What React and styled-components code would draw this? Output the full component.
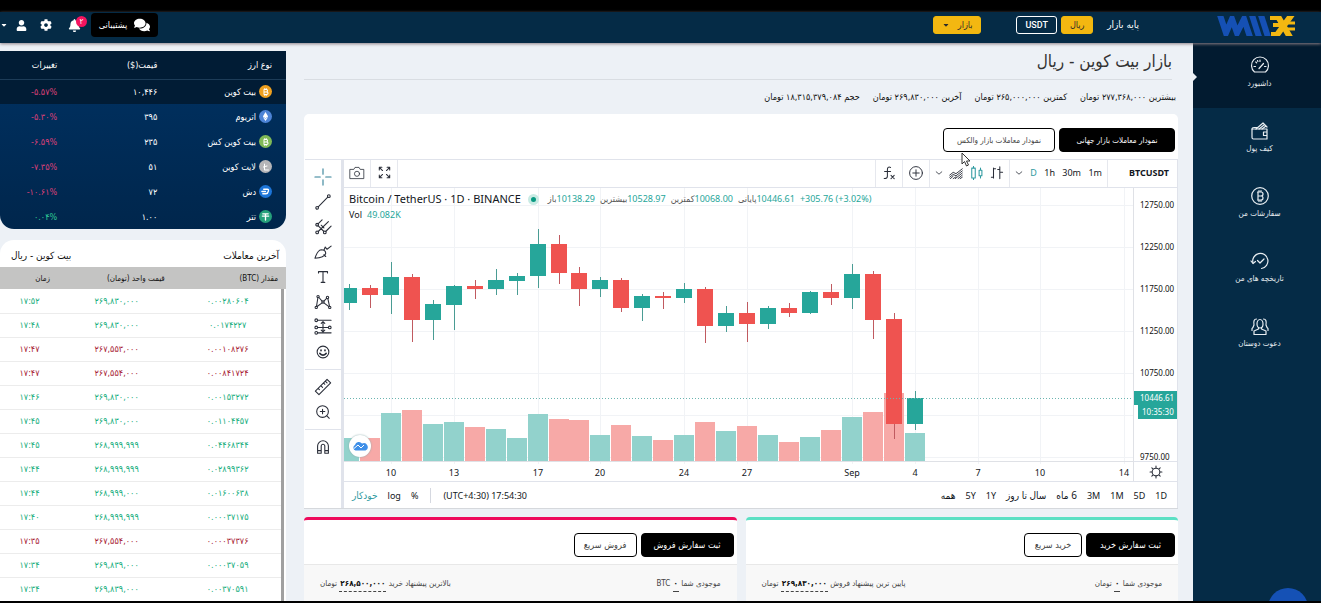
import React from "react";
import styled, { createGlobalStyle, css } from "styled-components";
import { FaCog, FaUser, FaBell, FaComments, FaCaretDown } from "react-icons/fa";
import { FaBitcoinSign, FaEthereum, FaLitecoinSign } from "react-icons/fa6";

const FA = `"DejaVu Sans Condensed", "DejaVu Sans", sans-serif`;
const LATIN = `"Noto Sans", "Open Sans", "DejaVu Sans Condensed", "DejaVu Sans", sans-serif`;
const UP = "#26a69a";
const DOWN = "#ef5350";

const GlobalStyle = createGlobalStyle`
  * { box-sizing: border-box; }
  html, body { margin: 0; background: #000; }
  body { font-family: ${FA}; color: #111; }
  button { font: inherit; cursor: pointer; }
  a { color: inherit; text-decoration: none; }
  table { border-collapse: collapse; border-spacing: 0; }
`;

const Page = styled.div`
  height: 100vh;
  padding: 12px 0 2px;
  display: flex;
  flex-direction: column;
  overflow: hidden;
`;

/* ---------- header ---------- */

const Header = styled.header`
  flex: none;
  display: flex;
  align-items: center;
  height: 31px;
  background: #052b46;
  color: #fff;
  box-shadow: 0 1px 3px #8d8087;
  z-index: 2;
`;

const Brand = styled.a`
  display: flex;
  justify-content: center;
  width: 128px;
  padding-bottom: 4px;
`;

const MarketBase = styled.div`
  display: flex;
  align-items: center;
  gap: 4px;
  padding-right: 54px;
  padding-bottom: 6px;
`;

const BaseLabel = styled.span`
  font-size: 10px;
  margin-left: 10px;
`;

const HeaderButton = styled.button`
  display: flex;
  align-items: center;
  justify-content: center;
  gap: 8px;
  height: 18px;
  min-width: ${(p) => p.$w}px;
  padding: 0;
  border-radius: 3px;
  font-size: 9px;
  border: 1px solid ${(p) => (p.$outline ? "#fff" : "#f0b90b")};
  background: ${(p) => (p.$outline ? "transparent" : "#f3b711")};
  color: ${(p) => (p.$outline ? "#fff" : "#2b2b2b")};
  ${(p) => p.$outline && css`font-family: Roboto, sans-serif; font-weight: 500; font-size: 9px;`}
`;

const MarketMenu = styled.div`
  padding-right: 35px;
  padding-bottom: 6px;
`;

const UserTools = styled.div`
  display: flex;
  align-items: center;
  margin-right: auto;
  padding: 0 0 5px;
`;

const SupportButton = styled.button`
  display: flex;
  align-items: center;
  justify-content: center;
  gap: 7px;
  width: 67px;
  height: 24px;
  padding: 0;
  border: 0;
  border-radius: 4px;
  background: #000;
  color: #fff;
  font-size: 9px;
  margin-left: 10px;
`;

const ToolButton = styled.button`
  position: relative;
  display: flex;
  padding: 0;
  border: 0;
  background: none;
  color: #fff;
  margin-left: ${(p) => p.$gap}px;
`;

const Badge = styled.span`
  position: absolute;
  top: -3px;
  right: -6px;
  width: 11px;
  height: 11px;
  border-radius: 50%;
  background: #f5145f;
  font-size: 8px;
  line-height: 11px;
  text-align: center;
`;

/* ---------- frame ---------- */

const Body = styled.div`
  flex: 1;
  min-height: 0;
  display: flex;
  background: #edf1f6;
`;

const SideWrap = styled.div`
  position: relative;
  display: flex;
  flex: none;
  &::before {
    content: "";
    position: absolute;
    left: 0;
    top: 30px;
    border: 4px solid transparent;
    border-left-color: #edf1f6;
    z-index: 1;
  }
`;

const Sidebar = styled.nav`
  position: relative;
  width: 128px;
  background: #052b46;
  overflow: hidden;
`;

const NavItem = styled.a`
  display: flex;
  flex-direction: column;
  align-items: center;
  gap: 2px;
  height: 65px;
  padding: 13px 0 0 5px;
  background: ${(p) => (p.$active ? "#021b30" : "transparent")};
  color: #e9eef2;
  font-size: 8px;
  line-height: 12px;
`;

const ChatBubble = styled.button`
  position: absolute;
  left: 75px;
  bottom: -27px;
  width: 40px;
  height: 40px;
  border: 0;
  border-radius: 50%;
  background: #1551b5;
`;

const Main = styled.main`
  flex: 1;
  min-width: 0;
  padding: 0 15px 0 18px;
  overflow: hidden;
`;

const Aside = styled.aside`
  flex: none;
  display: flex;
  flex-direction: column;
  gap: 11px;
  width: 286px;
  padding-top: 8px;
`;

/* ---------- coin table ---------- */

const CoinTable = styled.table`
  flex: none;
  width: 100%;
  table-layout: fixed;
  border-radius: 0 0 14px 14px;
  overflow: hidden;
  background: linear-gradient(#003263, #00264c);
  color: #fff;
  font-size: 9px;
  th {
    height: 28px;
    padding: 0;
    text-align: right;
    font-weight: 400;
    background: #011c35;
    border-bottom: 1px solid #1d3c58;
  }
  th:first-child, td:first-child { padding-right: 14px; }
`;

const CoinRow = styled.tr`
  background: ${(p) => (p.$active ? "#011c35" : "transparent")};
  td { height: 25px; padding: 0; text-align: right; }
`;

const CoinName = styled.span`
  display: flex;
  align-items: center;
  gap: 3px;
`;

const CoinIcon = styled.span`
  display: flex;
  align-items: center;
  justify-content: center;
  width: 13px;
  height: 13px;
  border-radius: 50%;
  background: ${(p) => p.$bg};
  color: #fff;
`;

const Change = styled.span`
  color: ${(p) => (p.$up ? "#2fc795" : "#dc4078")};
`;

/* ---------- trades ---------- */

const Trades = styled.section`
  flex: 1;
  min-height: 0;
  background: #fff;
  border-radius: 14px 14px 0 0;
  overflow: hidden;
`;

const TradesTitle = styled.div`
  display: flex;
  justify-content: space-between;
  align-items: center;
  height: 27px;
  padding: 3px 7px 0 11px;
  font-size: 10px;
  h2 { margin: 0; font-size: 10px; font-weight: 400; }
`;

const TradesTable = styled.table`
  width: 100%;
  table-layout: fixed;
  font-size: 9px;
  th {
    height: 22px;
    padding: 0 8px 0 0;
    text-align: right;
    background: #c4c4c3;
    font-size: 8px;
    font-weight: 400;
    white-space: nowrap;
  }
  th:nth-child(2) { padding-right: 4px; }
  th:nth-child(3) { padding-right: 10px; }
`;

const TradesScroll = styled.div`
  border-right: 3px solid #a0a0a0;
  margin-right: 2px;
`;

const TradeRow = styled.tr`
  color: ${(p) => (p.$up ? "#16ad7c" : "#a81c34")};
  td {
    height: 24px;
    padding: 0;
    text-align: center;
    border-bottom: 1px solid #ececec;
  }
`;

/* ---------- market summary ---------- */

const Title = styled.h1`
  margin: 0 6px 0 0;
  height: 37px;
  line-height: 37px;
  border-bottom: 1px solid #d9dde2;
  font-size: 17px;
  font-weight: 400;
  color: #333;
`;

const Stats = styled.div`
  display: flex;
  gap: 13px;
  height: 34px;
  padding-right: 2px;
  line-height: 34px;
  font-size: 9px;
  white-space: nowrap;
`;

const ChartCard = styled.section`
  position: relative;
  background: #fff;
  border-radius: 5px 5px 0 0;
  border-bottom: 1px solid #d5d8dc;
`;

const Tabs = styled.div`
  display: flex;
  gap: 4px;
  padding: 14px 3px 7px;
`;

const PillButton = styled.button`
  height: 24px;
  width: ${(p) => p.$w}px;
  padding: 0;
  border: 1px solid #000;
  border-radius: 4px;
  background: ${(p) => (p.$solid ? "#000" : "#fff")};
  color: ${(p) => (p.$solid ? "#fff" : "#444")};
  font-size: ${(p) => (p.$small ? 8 : 9)}px;
  white-space: nowrap;
`;

const Pointer = styled.svg`
  position: absolute;
  left: 657px;
  top: 38px;
`;

/* ---------- chart widget ---------- */

const Widget = styled.div`
  display: flex;
  direction: ltr;
  height: 349px;
  margin-left: 1px;
  border-top: 1px solid #e0e3eb;
  border-right: 1px solid #e0e3eb;
  font-family: ${LATIN};
`;

const DrawBar = styled.div`
  flex: none;
  display: flex;
  flex-direction: column;
  width: 39px;
  border-right: 3px solid #e0e3eb;
`;

const DrawGroup = styled.div`
  display: flex;
  flex-direction: column;
  padding: ${(p) => p.$pad};
  & + & { border-top: 1px solid #e0e3eb; }
`;

const DrawButton = styled.button`
  display: flex;
  align-items: center;
  justify-content: center;
  height: 25px;
  padding: 0;
  border: 0;
  background: none;
`;

const Pane = styled.div`
  flex: 1;
  min-width: 0;
  display: flex;
  flex-direction: column;
`;

const TopBar = styled.div`
  flex: none;
  display: flex;
  flex-direction: row-reverse;
  height: 28px;
  border-bottom: 1px solid #e0e3eb;
`;

const ToolGroup = styled.div`
  display: flex;
  flex-direction: row-reverse;
  align-items: center;
  justify-content: space-between;
  width: ${(p) => p.$w}px;
  padding: 0 ${(p) => p.$pad || 5}px 2px;
  ${(p) => (p.$end ? "border-right" : "border-left")}: 1px solid #e6e8ee;
  ${(p) => p.$end && "justify-content: center;"}
`;

const Spacer = styled.div`
  flex: 1;
`;

const PlainButton = styled.button`
  display: flex;
  align-items: center;
  padding: 0;
  border: 0;
  background: none;
  font-size: ${(p) => p.$size || 9}px;
  font-weight: ${(p) => (p.$bold ? 700 : 400)};
  color: ${(p) => (p.$on ? "#2f9aa0" : "#131722")};
  white-space: nowrap;
`;

const Plot = styled.div`
  flex: 1;
  min-height: 0;
  display: flex;
`;

const Canvas = styled.div`
  position: relative;
  flex: 1;
  min-width: 0;
  border-right: 1px solid #dfe1e6;
`;

const ChartSvg = styled.svg`
  display: block;
  width: 100%;
  height: 293px;
  text { font-size: 9px; fill: #131722; }
`;

const Legend = styled.div`
  position: absolute;
  left: 5px;
  top: 3px;
  display: flex;
  flex-direction: column;
  color: #131722;
`;

const LegendRow = styled.div`
  display: flex;
  align-items: center;
  height: 16px;
  font-size: 9px;
  line-height: 16px;
  white-space: nowrap;
`;

const Symbol = styled.span`
  font-size: 11px;
`;

const Live = styled.span`
  width: 11px;
  height: 11px;
  margin: 0 9px 0 7px;
  border: 3px solid #c9ebe4;
  border-radius: 50%;
  background: #089981;
`;

const Quote = styled.span`
  margin-right: 5px;
  color: ${(p) => (p.$dark ? "#131722" : "#555")};
  b { font-weight: 400; color: ${UP}; unicode-bidi: isolate; }
`;

const Cloud = styled.span`
  position: absolute;
  left: 5px;
  top: 247px;
  display: flex;
  align-items: center;
  justify-content: center;
  width: 22px;
  height: 22px;
  border-radius: 50%;
  background: #fff;
  box-shadow: 0 0 2px #8aa;
`;

const PriceAxis = styled.div`
  position: relative;
  flex: none;
  display: flex;
  flex-direction: column;
  gap: 28px;
  width: 43px;
  height: 293px;
  padding: 10px 0 0 6px;
  font-size: 8px;
  line-height: 14px;
  overflow: hidden;
  span { height: 14px; }
`;

const PriceTag = styled.div`
  position: absolute;
  top: ${(p) => p.$top}px;
  left: ${(p) => p.$left}px;
  right: 0;
  height: 14px;
  padding-left: ${(p) => p.$pad}px;
  background: ${UP};
  color: #fff;
`;

const AxisSettings = styled.button`
  position: absolute;
  left: 0;
  right: 0;
  bottom: 0;
  display: flex;
  align-items: center;
  justify-content: center;
  height: 20px;
  padding: 0;
  border: 0;
  border-top: 1px solid #e0e3eb;
  background: #fff;
`;

const BottomBar = styled.div`
  flex: none;
  display: flex;
  flex-direction: row-reverse;
  align-items: center;
  gap: 10px;
  height: 27px;
  padding: 0 10px 0 8px;
  border-top: 1px solid #e0e3eb;
`;

const Divider = styled.span`
  width: 1px;
  height: 15px;
  margin: 0 2px;
  background: #d5d8e0;
`;

/* ---------- order panels ---------- */

const Orders = styled.div`
  display: flex;
  gap: 9px;
  padding-top: 8px;
`;

const OrderPanel = styled.section`
  flex: 1;
  border-top: 3px solid ${(p) => p.$accent};
  border-radius: 4px 4px 0 0;
  background: #fff;
`;

const OrderTabs = styled.div`
  display: flex;
  gap: 4px;
  height: 45px;
  padding: 13px 3px 0;
  border-bottom: 1px solid #e8e8e8;
`;

const OrderInfo = styled.div`
  display: flex;
  justify-content: space-between;
  height: 60px;
  padding: 12px 16px 0;
  background: #f8f8f8;
  font-size: 8px;
  line-height: 14px;
  color: #444;
  white-space: nowrap;
`;

const Dashed = styled.b`
  display: inline-block;
  padding: 0 1px;
  border-bottom: 1px dashed #444;
  color: #111;
`;

/* ---------- drawings ---------- */

const Logo = () => (
  <svg width="80" height="20" viewBox="0 0 80 20" role="img" aria-label="Wallex">
    <g fill="none" stroke="#1550b4" strokeWidth="6" strokeLinejoin="miter">
      <path d="M2 -4 L9 17 L15 3 L20 17 L27 3 L34 24" />
      <path d="M34 -4 L43 24" />
      <path d="M43 -4 L52 24" />
    </g>
    <g fill="none" stroke="#f3b711">
      <path strokeWidth="6" d="M59 -3 L74 23 M76 -3 L57 23" />
      <path strokeWidth="4" d="M53 2 H61 M56 9 H66 M54 18 H60" />
      <path strokeWidth="3" d="M68 7 H78 M68 13 H78" />
    </g>
  </svg>
);

const Line = ({ size = 20, w = 1.2, color = "#e9eef2", children }) => (
  <svg width={size} height={size} viewBox="0 0 20 20" fill="none" stroke={color} strokeWidth={w} strokeLinecap="round" strokeLinejoin="round" aria-hidden="true">
    {children}
  </svg>
);

const NAV = [
  ["داشبورد", <><path d="M4.500 16 A8.500 8.500 0 1 1 15.500 16 Z" /><path d="M9 12.500 L13.500 7.500 M4 10.500 h1.500 M14.500 10.500 h1.500 M10 4 v1.500 M5.800 6 l.9 .9 M7.500 4.600 l.4 .8" /></>],
  ["کیف پول", <><path d="M2 8 H17 V18 H3.500 Q2 18 2 16.500 Z M17 11 H13.500 V14.500 H17" /><path d="M6 8 L13 2 L17 6 M9 8 L14 4 M12 8 l4-3 M2 8 Q2 6.500 4 6.500 H7" /></>],
  ["سفارشات من", <><circle cx="10" cy="10" r="8.300" /><path d="M7.500 6 H11 A2 2 0 0 1 11 10 H8 M11 10 A2 2 0 0 1 11 14 H7.500 M8 6 V14 M9 4.500 V6 M11 4.500 V6 M9 14 V15.500 M11 14 V15.500" /></>],
  ["تاریخچه های من", <><path d="M3 12 A7.600 7.600 0 1 1 11.500 17.500" /><path d="M1 10 L3 12.500 L5.500 10.500 M7.500 9.500 L10 12 L14 8" /></>],
  ["دعوت دوستان", <><path d="M7 8 A3 4.500 0 0 1 13 8 A3 4 0 0 1 7 8 Z" /><path d="M8.500 11.500 V13 L4 15 V18.500 H16 V15 L11.500 13 V11.500" /><path d="M6.500 3 Q3 3 4 9 Q3 12 2 12.500 V14.500 M13.500 3 Q17 3 16 9 Q17 12 18 12.500 V14.500" /></>],
];

const INK = "#2a2e39";
const DRAW_TOOLS = [
  [
    ["Cross", <path stroke="#2f7f96" d="M10 1 V7 M10 13 V19 M1 10 H7 M13 10 H19" />],
    ["Trend line", <><circle cx="3.500" cy="16.500" r="1.500" /><circle cx="16.500" cy="3.500" r="1.500" /><path d="M4.700 15.300 L15.300 4.700" /></>],
    ["Pitchfork", <><circle cx="3.500" cy="7.500" r="1.500" /><circle cx="3.500" cy="16" r="1.500" /><circle cx="12" cy="16" r="1.500" /><path d="M4.500 6.500 L9 2 M4.700 15 L16 4 M13 15 L19 9 M4.500 8.500 L11 15 M8 8 l3 3" /></>],
    ["Brush", <path d="M1 17 Q4 8 8 7.500 Q13 7.500 13 11.500 Q12 16 1 17 Z M11 8 L12.500 4.500 L14.500 7 L19 3.500 M11 13 l2 2" />],
    ["Text", <path d="M5 5.500 V4 H15 V5.500 M10 4 V16 M8 16 H12" />],
    ["Patterns", <><circle cx="4.500" cy="4" r="1.300" /><circle cx="2.500" cy="16" r="1.300" /><circle cx="15" cy="5" r="1.300" /><circle cx="17.500" cy="16" r="1.300" /><circle cx="10" cy="10" r="1.300" /><path d="M4.300 5.300 L2.800 14.700 M5.500 5 L9 9 M11 9 L14 6 M15.400 6.300 L17.200 14.700 M3.500 15 L9 11 M11 11 L16.500 15.200" /></>],
    ["Prediction", <><circle cx="2.500" cy="2.500" r="1.500" /><circle cx="2.500" cy="10.500" r="1.500" /><circle cx="17.500" cy="10.500" r="1.500" /><circle cx="2.500" cy="16.500" r="1.500" /><path d="M4 2.500 H19 M4 10.500 H16 M4 16.500 H19 M10 4 V15 M8 6 L10 4 L12 6 M8 13.500 L10 15.500 L12 13.500" /></>],
    ["Emoji", <><circle cx="10" cy="10" r="6.500" /><path strokeWidth="1.800" d="M7.800 7.800 v.8 M12.200 7.800 v.8 M6.500 11.500 Q10 15.500 13.500 11.500" /></>],
  ],
  [
    ["Measure", <path d="M1.500 14.500 L14.500 1.500 L18.500 5.500 L5.500 18.500 Z M4.500 11.500 l1.500 1.500 M7.500 8.500 l2 2 M10.500 5.500 l1.500 1.500 M12.500 3.500 l2 2" />],
    ["Zoom in", <><circle cx="9.500" cy="9.500" r="6.500" /><path d="M14.300 14.300 L17 17 M9.500 7 V12 M7 9.500 H12" /></>],
  ],
  [["Magnet", <path d="M4 17 V9 A6 6 0 0 1 16 9 V17 H12 V9 A2 2 0 0 0 8 9 V17 Z M4 14 H8 M12 14 H16" />]],
];
const DRAW_PADS = ["4px 0 5px", "4px 0 5px", "4px 0"];

const Chevron = () => (
  <Line size={8} w={2} color={INK}><path d="M3 7 L10 13 L17 7" /></Line>
);

/* ---------- data ---------- */

const COINS = [
  ["بیت کوین", "۱۰,۴۴۶", "-۵.۵۷%", "#efa01f", <FaBitcoinSign size={8} />],
  ["اتریوم", "۳۹۵", "-۵.۳۰%", "#4d84d6", <FaEthereum size={9} />],
  ["بیت کوین کش", "۲۳۵", "-۶.۵۹%", "#7fb957", <FaBitcoinSign size={8} />],
  ["لایت کوین", "۵۱", "-۷.۳۵%", "#b5b5b8", <FaLitecoinSign size={8} />],
  ["دش", "۷۲", "-۱۰.۶۱%", "#1c75d8", <Line size={9} w={3} color="#fff"><path d="M6 5 H14 Q18 5 16 10 Q15 15 11 15 H4 M2 10 H10" /></Line>],
  ["تتر", "۱.۰۰", "۰.۰۴%", "#26a17b", <Line size={9} w={3} color="#fff"><path d="M4 4 H16 M10 4 V18 M3 9 H17" /></Line>],
];

const TRADES = [
  ["۰.۰۰۲۸۰۶۰۴", "۲۶۹,۸۳۰,۰۰۰", "۱۷:۵۲", 1],
  ["۰.۰۱۷۴۲۲۷", "۲۶۹,۸۳۰,۰۰۰", "۱۷:۴۸", 1],
  ["۰.۰۰۱۰۸۲۷۶", "۲۶۷,۵۵۳,۰۰۰", "۱۷:۴۷", 0],
  ["۰.۰۰۸۴۱۷۲۴", "۲۶۷,۵۵۴,۰۰۰", "۱۷:۴۷", 0],
  ["۰.۰۰۱۵۳۲۷۲", "۲۶۹,۸۳۰,۰۰۰", "۱۷:۴۶", 1],
  ["۰.۰۱۱۰۴۴۵۷", "۲۶۹,۸۳۰,۰۰۰", "۱۷:۴۵", 1],
  ["۰.۰۴۴۶۸۳۴۴", "۲۶۸,۹۹۹,۹۹۹", "۱۷:۴۵", 1],
  ["۰.۰۲۸۹۹۳۶۲", "۲۶۸,۹۹۹,۹۹۹", "۱۷:۴۴", 1],
  ["۰.۰۱۶۰۰۶۳۸", "۲۶۸,۹۹۹,۰۰۰", "۱۷:۴۴", 1],
  ["۰.۰۰۰۳۷۱۷۵", "۲۶۸,۹۹۹,۹۹۹", "۱۷:۴۰", 1],
  ["۰.۰۰۰۳۷۳۷۶", "۲۶۷,۵۵۴,۰۰۰", "۱۷:۳۵", 0],
  ["۰.۰۰۰۳۷۰۵۹", "۲۶۹,۸۳۹,۰۰۰", "۱۷:۳۴", 1],
  ["۰.۰۰۳۷۰۵۹۱", "۲۶۹,۸۳۹,۰۰۰", "۱۷:۳۴", 1],
];

// up, high, body top, body bottom, low, volume top
const CANDLES = [
  [1, 96, 100, 115, 122, 250], [0, 97, 100, 107, 120, 250], [1, 74, 89, 107, 126, 225],
  [0, 86, 89, 132, 154, 222], [1, 112, 116, 132, 152, 236], [1, 97, 98, 117, 142, 234],
  [0, 92, 98, 101, 111, 239], [1, 81, 92, 101, 107, 241], [1, 85, 88, 93, 107, 250],
  [1, 41, 56, 88, 100, 226], [0, 47, 56, 85, 96, 231], [0, 79, 85, 101, 118, 232],
  [1, 89, 92, 101, 109, 247], [0, 90, 92, 120, 124, 237], [1, 106, 108, 120, 133, 248],
  [0, 104, 108, 110, 121, 252], [1, 95, 101, 110, 115, 247], [0, 99, 101, 138, 155, 234],
  [1, 118, 125, 138, 144, 243], [0, 114, 125, 136, 154, 238], [1, 118, 120, 136, 141, 247],
  [0, 115, 120, 125, 129, 254], [1, 103, 104, 125, 126, 249], [0, 96, 104, 110, 117, 242],
  [1, 76, 86, 110, 121, 229], [0, 83, 86, 132, 151, 224], [0, 125, 131, 236, 251, 205],
  [1, 203, 210, 236, 242, 245],
];
const dayX = (i) => Math.round(5 + i * 20.95);
const DATES = [[2, "10"], [5, "13"], [9, "17"], [12, "20"], [16, "24"], [19, "27"], [24, "Sep"], [27, "4"], [30, "7"], [33, "10"], [37, "14"]];
const GRID_Y = [17, 59, 101, 143, 185, 227, 269];
const PRICES = ["12750.00", "12250.00", "11750.00", "11250.00", "10750.00", "", "9750.00"];
const QUOTES = [["باز", "10138.29"], ["بیشترین", "10528.97"], ["کمترین", "10068.00"], ["پایانی", "10446.61"]];
const STATS = ["بیشترین ۲۷۷,۳۶۸,۰۰۰ تومان", "کمترین ۲۶۵,۰۰۰,۰۰۰ تومان", "آخرین ۲۶۹,۸۳۰,۰۰۰ تومان", "حجم ۱۸,۳۱۵,۳۷۹,۰۸۴ تومان"];
const RANGES = [["1D"], ["5D"], ["1M"], ["3M"], ["6 ماه", 10], ["سال تا روز", 10], ["1Y"], ["5Y"], ["همه", 10]];

const CandleChart = () => (
  <ChartSvg role="img" aria-label="BTCUSDT">
    <g stroke="#f1f3f6" shapeRendering="crispEdges">
      {GRID_Y.map((y) => <line key={y} x1="0" x2="100%" y1={y} y2={y} />)}
      {DATES.map(([i]) => <line key={i} x1={dayX(i)} x2={dayX(i)} y1="0" y2="276" />)}
    </g>
    {CANDLES.map(([up, high, top, bottom, low, vol], i) => {
      const x = dayX(i);
      return (
        <g key={i} fill={up ? UP : DOWN} shapeRendering="crispEdges">
          <rect x={x - 10} y={vol} width="20" height={273 - vol} fill={up ? "#92d2cc" : "#f7a9a7"} />
          <rect x={x} y={high} width="1" height={low - high} fill={up ? "#4a9c94" : "#c05a60"} />
          <rect x={x - 8} y={top} width="16" height={bottom - top} />
        </g>
      );
    })}
    <line x1="0" x2="100%" y1="210.5" y2="210.5" stroke="#6bb5b0" strokeDasharray="1 2" />
    <line x1="0" x2="100%" y1="273.5" y2="273.5" stroke="#dfe1e6" />
    {DATES.map(([i, label]) => (
      <text key={i} x={dayX(i)} y="288" textAnchor="middle">{label}</text>
    ))}
  </ChartSvg>
);

const TradingWidget = () => (
  <Widget>
    <DrawBar>
      {DRAW_TOOLS.map((group, g) => (
        <DrawGroup key={g} $pad={DRAW_PADS[g]}>
          {group.map(([name, art]) => (
            <DrawButton key={name} aria-label={name}><Line size={18} w={1.2} color={INK}>{art}</Line></DrawButton>
          ))}
        </DrawGroup>
      ))}
    </DrawBar>
    <Pane>
      <TopBar>
        <ToolGroup $w={70} $pad={8}><PlainButton $bold>BTCUSDT</PlainButton></ToolGroup>
        <ToolGroup $w={98}>
          <PlainButton>1m</PlainButton>
          <PlainButton>30m</PlainButton>
          <PlainButton>1h</PlainButton>
          <PlainButton $on>D</PlainButton>
          <PlainButton aria-label="Intervals"><Chevron /></PlainButton>
        </ToolGroup>
        <ToolGroup $w={80}>
          <PlainButton aria-label="Bars"><Line size={14} w={1.500} color={INK}><path d="M5 3 V17 M5 4 H8 M2 16 H5 M14 1 V18 M14 5 H11 M14 9 H18" /></Line></PlainButton>
          <PlainButton aria-label="Candles"><Line size={14} w={1.500} color="#2f9aa0"><path d="M5 0 V3 M5 17 V20 M2.500 3 H7.500 V17 H2.500 Z M15 3 V6 M15 14 V17 M13 6 H17 V14 H13 Z" /></Line></PlainButton>
          <PlainButton aria-label="Area"><Line size={14} w={1.300} color={INK}><path d="M1 13 L6 9 L10 11 L19 4 M1 16 L6 12 L10 14 L19 7 M2 18 L6 14.500 M6 18 L10 15.500 M9 18 L19 10 M13 18 L19 13 M16 18 L19 16" /></Line></PlainButton>
          <PlainButton aria-label="Styles"><Chevron /></PlainButton>
        </ToolGroup>
        <ToolGroup $w={27}><PlainButton aria-label="Compare"><Line size={16} w={1.200} color={INK}><circle cx="10" cy="10" r="8" /><path d="M10 6 V14 M6 10 H14" /></Line></PlainButton></ToolGroup>
        <ToolGroup $w={27}><PlainButton aria-label="Indicators"><Line size={16} w={1.300} color={INK}><path d="M12 3 Q8 1.500 8 6 V14 Q8 17 4 17 M4.500 8 H12 M12.500 13 L16.500 17 M16.500 13 L12.500 17" /></Line></PlainButton></ToolGroup>
        <Spacer />
        <ToolGroup $w={27} $end><PlainButton aria-label="Full screen"><Line size={13} w={1.600} color={INK}><path d="M2 6 V2 H6 M2 2 L7 7 M14 2 H18 V6 M18 2 L13 7 M2 14 V18 H6 M2 18 L7 13 M14 18 H18 V14 M18 18 L13 13" /></Line></PlainButton></ToolGroup>
        <ToolGroup $w={27} $end><PlainButton aria-label="Snapshot"><Line size={16} w={1} color={INK}><path d="M1.500 5.500 H6 L7.500 3 H12.500 L14 5.500 H18.500 V17 H1.500 Z" /><circle cx="10" cy="11" r="3.200" /></Line></PlainButton></ToolGroup>
      </TopBar>
      <Plot>
        <Canvas>
          <CandleChart />
          <Legend>
            <LegendRow>
              <Symbol>Bitcoin / TetherUS · 1D · BINANCE</Symbol>
              <Live />
              {QUOTES.map(([label, value]) => (
                <Quote key={label}>{label}<b>{value}</b></Quote>
              ))}
              <Quote><b>+305.76 (+3.02%)</b></Quote>
            </LegendRow>
            <LegendRow><Quote $dark>Vol</Quote><Quote><b>49.082K</b></Quote></LegendRow>
          </Legend>
          <Cloud>
            <svg width="16" height="10" viewBox="0 0 16 10" aria-hidden="true">
              <path fill="#3f8fe8" d="M3.500 9.500 A3 3 0 0 1 3 4 A4 4 0 0 1 10 2.500 A3.600 3.600 0 0 1 13.500 9.500 Z" />
              <path fill="none" stroke="#fff" d="M2 7.500 L6 4 L9 7 L12 4" />
            </svg>
          </Cloud>
        </Canvas>
        <PriceAxis>
          {PRICES.map((p, i) => <span key={i}>{p}</span>)}
          <PriceTag $top={203} $left={0} $pad={6}>10446.61</PriceTag>
          <PriceTag $top={217} $left={4} $pad={4}>10:35:30</PriceTag>
          <AxisSettings aria-label="Settings">
            <Line size={14} w={1.500} color={INK}><circle cx="10" cy="10" r="5.500" /><path d="M10 1.500 V4 M10 16 V18.500 M1.500 10 H4 M16 10 H18.500 M4 4 L5.700 5.700 M14.300 14.300 L16 16 M4 16 L5.700 14.300 M14.300 5.700 L16 4" /></Line>
          </AxisSettings>
        </PriceAxis>
      </Plot>
      <BottomBar>
        {RANGES.map(([label, size]) => <PlainButton key={label} dir="rtl" $size={size}>{label}</PlainButton>)}
        <Spacer />
        <PlainButton>(UTC+4:30) 17:54:30</PlainButton>
        <Divider />
        <PlainButton>%</PlainButton>
        <PlainButton>log</PlainButton>
        <PlainButton $on $size={10}>خودکار</PlainButton>
      </BottomBar>
    </Pane>
  </Widget>
);

const Order = ({ accent, main, quick, mainW, quickW, unit, offer, price }) => (
  <OrderPanel $accent={accent}>
    <OrderTabs>
      <PillButton $solid $w={mainW}>{main}</PillButton>
      <PillButton $w={quickW}>{quick}</PillButton>
    </OrderTabs>
    <OrderInfo>
      <span>موجودی شما <Dashed>۰</Dashed> {unit}</span>
      <span>{offer} <Dashed>{price}</Dashed> تومان</span>
    </OrderInfo>
  </OrderPanel>
);

export default function App() {
  return (
    <Page dir="rtl">
      <GlobalStyle />
      <Header>
        <Brand href="#"><Logo /></Brand>
        <MarketBase>
          <BaseLabel>پایه بازار</BaseLabel>
          <HeaderButton $w={32}>ریال</HeaderButton>
          <HeaderButton $w={41} $outline>USDT</HeaderButton>
        </MarketBase>
        <MarketMenu>
          <HeaderButton $w={48}>بازار <FaCaretDown size={8} /></HeaderButton>
        </MarketMenu>
        <UserTools>
          <SupportButton><FaComments size={16} />پشتیبانی</SupportButton>
          <ToolButton $gap={16} aria-label="اعلان ها"><FaBell size={13} /><Badge>۲</Badge></ToolButton>
          <ToolButton $gap={13} aria-label="تنظیمات"><FaCog size={12} /></ToolButton>
          <ToolButton $gap={8} aria-label="حساب کاربری"><FaUser size={11} /></ToolButton>
          <FaCaretDown size={8} />
        </UserTools>
      </Header>
      <Body>
        <SideWrap>
          <Sidebar>
            {NAV.map(([label, art], i) => (
              <NavItem key={label} href="#" $active={i === 0}><Line>{art}</Line>{label}</NavItem>
            ))}
            <ChatBubble aria-label="گفتگو" />
          </Sidebar>
        </SideWrap>
        <Main>
          <Title>بازار بیت کوین - ریال</Title>
          <Stats>{STATS.map((s) => <span key={s}>{s}</span>)}</Stats>
          <ChartCard>
            <Tabs>
              <PillButton $solid $small $w={116}>نمودار معاملات بازار جهانی</PillButton>
              <PillButton $small $w={112}>نمودار معاملات بازار والکس</PillButton>
            </Tabs>
            <TradingWidget />
            <Pointer width="10" height="15" viewBox="0 0 10 15" aria-hidden="true">
              <path d="M1 1 V12 L3.500 9.500 L5.500 14 L7.500 13 L5.500 9 H9 Z" fill="#fff" stroke="#333" />
            </Pointer>
          </ChartCard>
          <Orders>
            <Order accent="#5be0c4" main="ثبت سفارش خرید" quick="خرید سریع" mainW={89} quickW={58} unit="تومان" offer="پایین ترین پیشنهاد فروش" price="۲۶۹,۸۳۰,۰۰۰" />
            <Order accent="#ee0a5c" main="ثبت سفارش فروش" quick="فروش سریع" mainW={93} quickW={63} unit="BTC" offer="بالاترین پیشنهاد خرید" price="۲۶۸,۵۰۰,۰۰۰" />
          </Orders>
        </Main>
        <Aside>
          <CoinTable>
            <colgroup><col width="45%" /><col width="35%" /><col width="20%" /></colgroup>
            <thead><tr><th>نوع ارز</th><th>قیمت($)</th><th>تغییرات</th></tr></thead>
            <tbody>
              {COINS.map(([name, price, change, bg, icon], i) => (
                <CoinRow key={name} $active={i === 0}>
                  <td><CoinName><CoinIcon $bg={bg}>{icon}</CoinIcon>{name}</CoinName></td>
                  <td>{price}</td>
                  <td><Change dir="ltr" $up={i === 5}>{change}</Change></td>
                </CoinRow>
              ))}
            </tbody>
          </CoinTable>
          <Trades>
            <TradesTitle><h2>آخرین معاملات</h2><span>بیت کوین - ریال</span></TradesTitle>
            <TradesTable>
              <colgroup><col width="41%" /><col width="38%" /><col width="21%" /></colgroup>
              <thead><tr><th>مقدار (BTC)</th><th>قیمت واحد (تومان)</th><th>زمان</th></tr></thead>
            </TradesTable>
            <TradesScroll>
              <TradesTable>
                <colgroup><col width="38%" /><col width="41%" /><col width="21%" /></colgroup>
                <tbody>
                  {TRADES.map(([amount, price, time, up], i) => (
                    <TradeRow key={i} $up={up}><td>{amount}</td><td>{price}</td><td>{time}</td></TradeRow>
                  ))}
                </tbody>
              </TradesTable>
            </TradesScroll>
          </Trades>
        </Aside>
      </Body>
    </Page>
  );
}
